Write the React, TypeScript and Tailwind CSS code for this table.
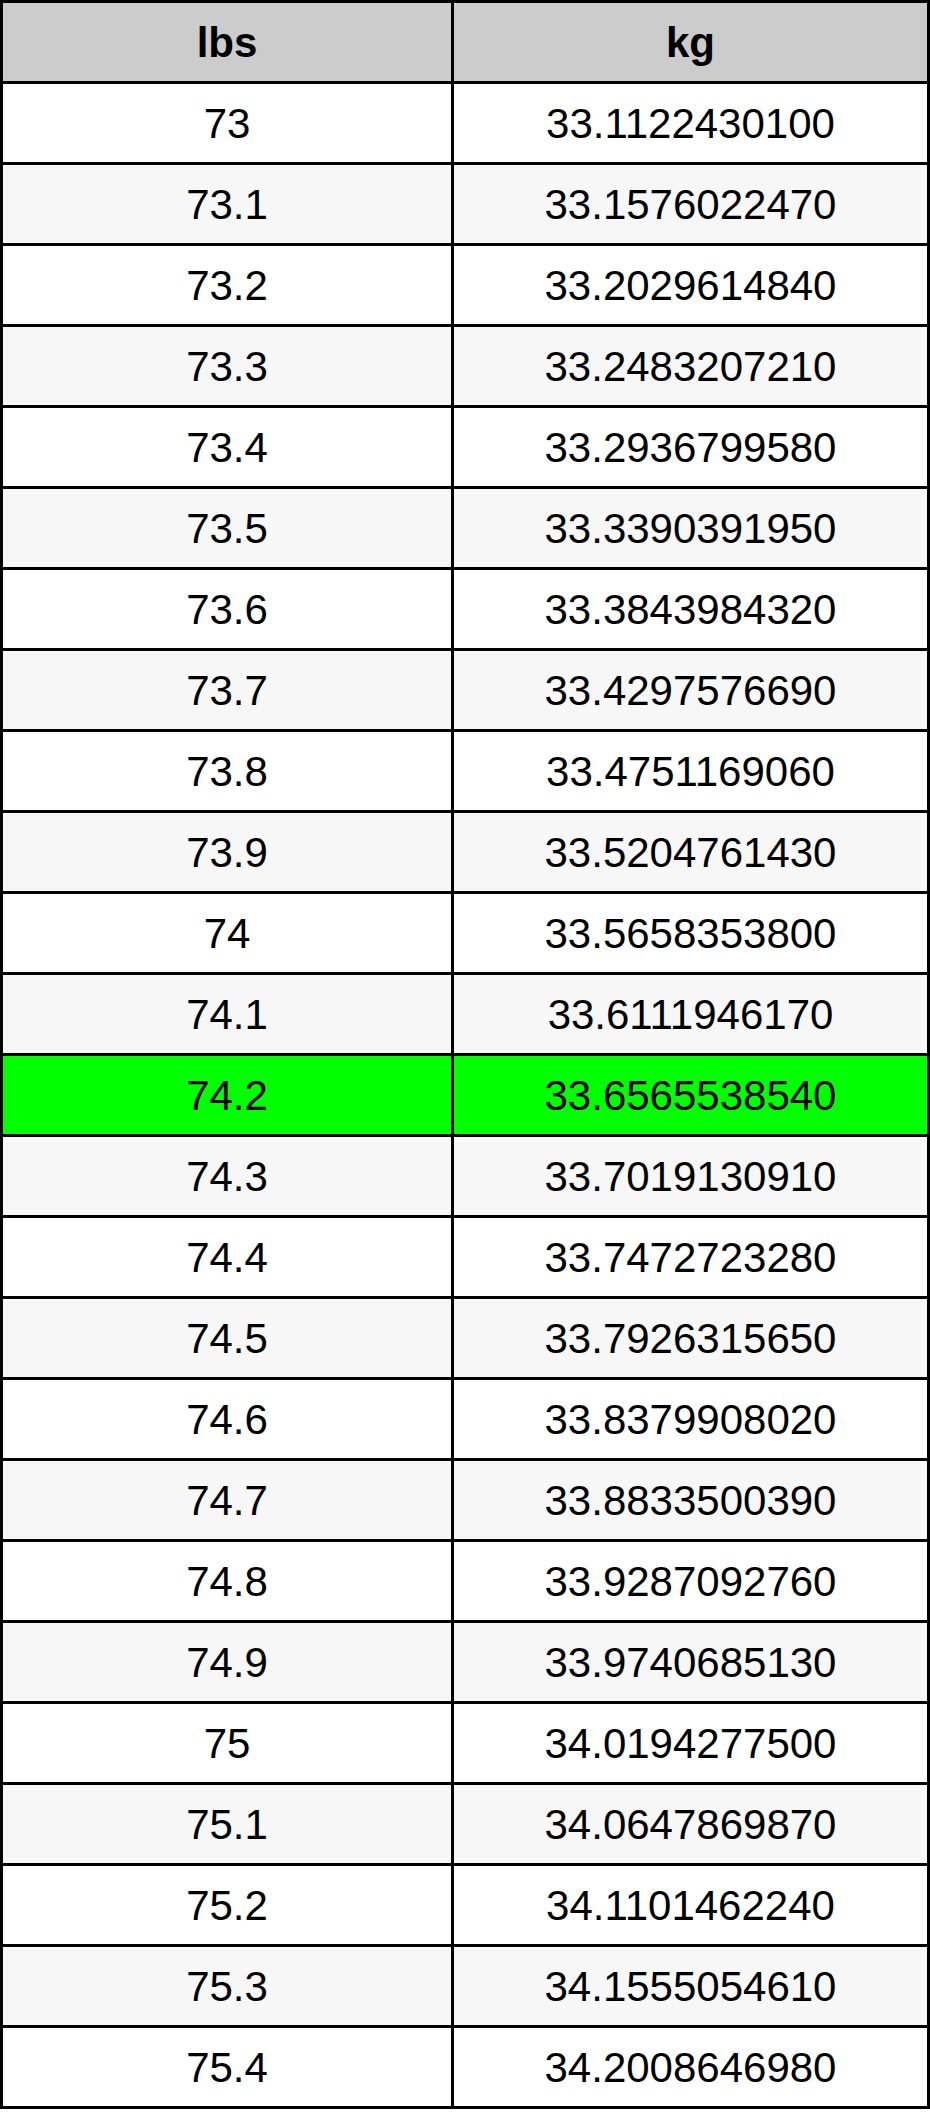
const rows: [string, string][] = [
  ["73", "33.1122430100"],
  ["73.1", "33.1576022470"],
  ["73.2", "33.2029614840"],
  ["73.3", "33.2483207210"],
  ["73.4", "33.2936799580"],
  ["73.5", "33.3390391950"],
  ["73.6", "33.3843984320"],
  ["73.7", "33.4297576690"],
  ["73.8", "33.4751169060"],
  ["73.9", "33.5204761430"],
  ["74", "33.5658353800"],
  ["74.1", "33.6111946170"],
  ["74.2", "33.6565538540"],
  ["74.3", "33.7019130910"],
  ["74.4", "33.7472723280"],
  ["74.5", "33.7926315650"],
  ["74.6", "33.8379908020"],
  ["74.7", "33.8833500390"],
  ["74.8", "33.9287092760"],
  ["74.9", "33.9740685130"],
  ["75", "34.0194277500"],
  ["75.1", "34.0647869870"],
  ["75.2", "34.1101462240"],
  ["75.3", "34.1555054610"],
  ["75.4", "34.2008646980"],
];

const HIGHLIGHT = "74.2";

const App = () => {
  return (
    <div className="w-[930px] bg-white font-['Liberation_Sans',Arial,sans-serif] text-black">
      <div className="grid grid-cols-[451px_476px] border-l-[3px] border-t-[3px] border-black">
        <div className="flex h-[81px] items-center justify-center border-b-[3px] border-r-[3px] border-black bg-[#cccccc] text-[42px] font-bold">
          lbs
        </div>
        <div className="flex h-[81px] items-center justify-center border-b-[3px] border-r-[3px] border-black bg-[#cccccc] text-[42px] font-bold">
          kg
        </div>
        {rows.map(([lbs, kg], i) => {
          const bg =
            lbs === HIGHLIGHT ? "bg-[#00ff00]" : i % 2 === 0 ? "bg-white" : "bg-[#f7f7f7]";
          return [
            <div
              key={lbs + "-l"}
              className={`flex h-[81px] items-center justify-center border-b-[3px] border-r-[3px] border-black text-[42px] ${bg}`}
            >
              {lbs}
            </div>,
            <div
              key={lbs + "-k"}
              className={`flex h-[81px] items-center justify-center border-b-[3px] border-r-[3px] border-black text-[42px] ${bg}`}
            >
              {kg}
            </div>,
          ];
        })}
      </div>
    </div>
  );
};

export default App;
